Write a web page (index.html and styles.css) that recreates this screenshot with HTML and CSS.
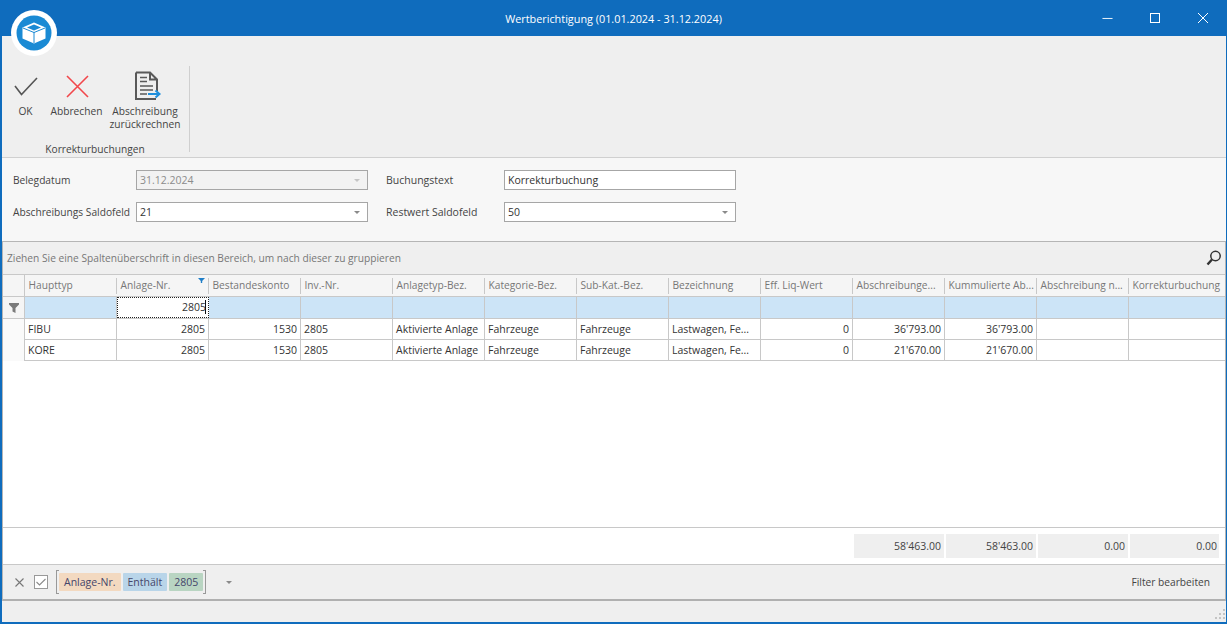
FILE: index.html
```html
<!DOCTYPE html>
<html lang="de">
<head>
<meta charset="utf-8">
<title>Wertberichtigung</title>
<link rel="stylesheet" href="styles.css">
</head>
<body>
<div class="window">
  <header class="titlebar">
    <div class="title">Wertberichtigung (01.01.2024 - 31.12.2024)</div>
    <div class="winbtns">
      <svg class="winbtn" viewBox="0 0 12 12"><path d="M0.5 6.5H11.5" stroke="#fff" fill="none"/></svg>
      <svg class="winbtn" viewBox="0 0 12 12"><rect x="1.5" y="1.5" width="9" height="9" stroke="#fff" fill="none"/></svg>
      <svg class="winbtn" viewBox="0 0 12 12"><path d="M1 1L11 11M11 1L1 11" stroke="#fff" fill="none"/></svg>
    </div>
  </header>
  <div class="logo">
    <svg viewBox="0 0 46 46" width="46" height="46">
      <circle cx="23" cy="23" r="23" fill="#fff"/>
      <circle cx="23" cy="23" r="17.500" fill="#1a8ad4"/>
      <path d="M23 12.500L34.500 17.500V28.500L23 33.500L11.500 28.500V17.500Z" fill="#fff"/>
      <path d="M23 14.500L30 17.500L23 20.500L16 17.500Z" fill="#1a8ad4"/>
      <path d="M23 22V33M12 18L23 22.500L34 18" stroke="#1a8ad4" stroke-width="1" fill="none"/>
    </svg>
  </div>
  <section class="ribbon">
    <div class="group">
      <div class="buttons">
        <div class="rbtn rbtn-ok">
          <svg class="ricon" viewBox="0 0 26 26"><path d="M3 13L9.500 21.500L25 5" stroke="#555" stroke-width="1.600" fill="none"/></svg>
          <span>OK</span>
        </div>
        <div class="rbtn rbtn-cancel">
          <svg class="ricon" viewBox="0 0 26 26"><path d="M4 3L25 24M25 3L4 24" stroke="#f2474b" stroke-width="1.600" fill="none"/></svg>
          <span>Abbrechen</span>
        </div>
        <div class="rbtn rbtn-calc">
          <svg class="ricon" viewBox="0 0 28 30"><path d="M2 1.500H16L23 8.500V20M16 1.500V8.500H23M22 28H2V1.500" stroke="#595959" stroke-width="2" fill="none"/><path d="M6 6.500H13M6 10.500H13M6 15H19M6 19H19M6 23H13" stroke="#595959" stroke-width="1.500" fill="none"/><path d="M14 23H25M21.500 19.500L25.500 23L21.500 26.500" stroke="#1f8fdc" stroke-width="2" fill="none"/></svg>
          <span>Abschreibung<br>zurückrechnen</span>
        </div>
      </div>
      <div class="group-name">Korrekturbuchungen</div>
    </div>
  </section>
  <section class="form">
    <div class="form-row">
      <label class="lbl lbl-a">Belegdatum</label>
      <div class="field field-a disabled"><span>31.12.2024</span><i class="arrow"></i></div>
      <label class="lbl lbl-b">Buchungstext</label>
      <div class="field field-b"><span>Korrekturbuchung</span></div>
    </div>
    <div class="form-row">
      <label class="lbl lbl-a">Abschreibungs Saldofeld</label>
      <div class="field field-a"><span>21</span><i class="arrow"></i></div>
      <label class="lbl lbl-b">Restwert Saldofeld</label>
      <div class="field field-b"><span>50</span><i class="arrow"></i></div>
    </div>
  </section>
  <section class="grid-wrap">
    <div class="group-panel">
      <span>Ziehen Sie eine Spaltenüberschrift in diesen Bereich, um nach dieser zu gruppieren</span>
      <svg class="search" viewBox="0 0 16 16"><circle cx="9.500" cy="6" r="4.700" stroke="#333" stroke-width="1.500" fill="none"/><path d="M6 9.500L1.500 14.500" stroke="#333" stroke-width="2.400" fill="none"/></svg>
    </div>
    <div class="row head">
      <div class="ind"></div>
      <div class="hc">Haupttyp</div>
      <div class="hc sorted">Anlage-Nr.<i class="filter-mark"></i></div>
      <div class="hc">Bestandeskonto</div>
      <div class="hc">Inv.-Nr.</div>
      <div class="hc">Anlagetyp-Bez.</div>
      <div class="hc">Kategorie-Bez.</div>
      <div class="hc">Sub-Kat.-Bez.</div>
      <div class="hc">Bezeichnung</div>
      <div class="hc">Eff. Liq-Wert</div>
      <div class="hc">Abschreibunge...</div>
      <div class="hc">Kummulierte Ab...</div>
      <div class="hc">Abschreibung n...</div>
      <div class="hc">Korrekturbuchung</div>
    </div>
    <div class="row filter">
      <div class="ind"><svg class="funnel" viewBox="0 0 10 10"><path d="M0 0H10V1.500L6.500 5V10L3.500 8.500V5L0 1.500Z" fill="#7a7a7a"/></svg></div>
      <div class="c"></div>
      <div class="c r active">2805<i class="caret"></i></div>
      <div class="c"></div><div class="c"></div><div class="c"></div><div class="c"></div><div class="c"></div><div class="c"></div><div class="c"></div><div class="c"></div><div class="c"></div><div class="c"></div><div class="c"></div>
    </div>
    <div class="row data">
      <div class="ind"></div>
      <div class="c">FIBU</div><div class="c r">2805</div><div class="c r">1530</div><div class="c">2805</div>
      <div class="c">Aktivierte Anlage</div><div class="c">Fahrzeuge</div><div class="c">Fahrzeuge</div><div class="c">Lastwagen, Fe...</div>
      <div class="c r">0</div><div class="c r">36'793.00</div><div class="c r">36'793.00</div><div class="c"></div><div class="c"></div>
    </div>
    <div class="row data">
      <div class="ind"></div>
      <div class="c">KORE</div><div class="c r">2805</div><div class="c r">1530</div><div class="c">2805</div>
      <div class="c">Aktivierte Anlage</div><div class="c">Fahrzeuge</div><div class="c">Fahrzeuge</div><div class="c">Lastwagen, Fe...</div>
      <div class="c r">0</div><div class="c r">21'670.00</div><div class="c r">21'670.00</div><div class="c"></div><div class="c"></div>
    </div>
    <div class="grid-empty"></div>
    <div class="summary">
      <div class="sum">58'463.00</div>
      <div class="sum">58'463.00</div>
      <div class="sum">0.00</div>
      <div class="sum">0.00</div>
    </div>
    <div class="filter-panel">
      <svg class="fp-x" viewBox="0 0 9 9"><path d="M0.500 0.500L8.500 8.500M8.500 0.500L0.500 8.500" stroke="#777" stroke-width="1.100" fill="none"/></svg>
      <div class="fp-check"><svg viewBox="0 0 10 8" width="10" height="8"><path d="M0.500 4L3.500 7L9.500 1" stroke="#8a8a8a" stroke-width="1.100" fill="none"/></svg></div>
      <div class="fp-expr">
        <span class="tag tag-field">Anlage-Nr.</span>
        <span class="tag tag-op">Enthält</span>
        <span class="tag tag-val">2805</span>
      </div>
      <i class="arrow fp-arrow"></i>
      <div class="fp-edit">Filter bearbeiten</div>
    </div>
  </section>
  <footer class="status"><svg class="grip" viewBox="0 0 11 11"><path d="M9 1h2v2H9zM5 5h2v2H5zM9 5h2v2H9zM1 9h2v2H1zM5 9h2v2H5zM9 9h2v2H9z" fill="#c4c4c4"/></svg></footer>
</div>
</body>
</html>
```
FILE: styles.css
```css
* { box-sizing: border-box; }
html, body { margin: 0; height: 100%; }
body { font-family: "Open Sans", "Liberation Sans", sans-serif; font-size: 10.200px; color: #444; background: #fff; overflow: hidden; }
.window { position: relative; width: 1227px; height: 624px; display: flex; flex-direction: column; border-left: 2px solid #0f6cbd; border-right: 1px solid #0f6cbd; border-bottom: 2px solid #0f6cbd; background: #efefef; }
.titlebar { height: 36px; margin: 0 -1px 0 -2px; background: #0f6cbd; color: #fff; position: relative; display: flex; align-items: center; justify-content: center; flex: none; }
.title { font-size: 10.850px; }
.winbtns { position: absolute; right: 0; top: 0; height: 36px; display: flex; align-items: center; gap: 36px; padding-right: 18px; }
.winbtn { width: 12px; height: 12px; display: block; }
.winbtn:nth-child(1) { width: 11px; }
.logo { position: absolute; left: 9px; top: 10px; width: 46px; height: 46px; }
.logo svg { display: block; }

.ribbon { height: 122px; flex: none; background: #efefef; border-bottom: 1px solid #d0d0d0; padding-top: 30px; }
.group { width: 188px; height: 86px; border-right: 1px solid #cfcfcf; display: flex; flex-direction: column; position: relative; }
.buttons { display: flex; height: 68px; align-items: flex-start; }
.rbtn { display: flex; flex-direction: column; align-items: center; text-align: center; line-height: 13px; position: relative; padding-top: 39px; }
.ricon { position: absolute; display: block; }
.rbtn-ok { width: 47px; }
.rbtn-ok .ricon { width: 26px; height: 26px; left: 10px; top: 7px; }
.rbtn-cancel { width: 55px; }
.rbtn-cancel .ricon { width: 26px; height: 26px; left: 14px; top: 7px; }
.rbtn-calc { width: 78px; margin-left: 2px; }
.rbtn-calc .ricon { width: 28px; height: 30px; left: 28px; top: 5px; }
.group-name { text-align: center; line-height: 13px; margin-top: 12px; padding-right: 1px; }

.form { height: 83px; flex: none; background: #f7f7f7; padding: 12px 0 0 11px; display: flex; flex-direction: column; gap: 12px; }
.form-row { display: flex; align-items: center; height: 20px; }
.lbl { width: 123px; flex: none; }
.lbl-b { width: 118px; margin-left: 18px; font-size: 10.500px; }
.field { height: 20px; background: #fff; border: 1px solid #a6a6a6; display: flex; align-items: center; justify-content: space-between; padding: 0 7px 0 3px; flex: none; color: #333; font-size: 10.500px; }
.field-a { width: 232px; }
.field-b { width: 232px; }
.field.disabled { background: #f2f2f2; color: #8c8c8c; }
.arrow { display: block; width: 0; height: 0; border: 3.500px solid transparent; border-top: 3.500px solid #8a8a8a; border-bottom: 0; }
.disabled .arrow { border-top-color: #c4c4c4; }

.grid-wrap { flex: 1; min-height: 0; display: flex; flex-direction: column; background: #fff; border-left: 1px solid #b5b5b5; border-right: 1px solid #b5b5b5; }
.group-panel { height: 34px; flex: none; background: #efefef; border-top: 1px solid #b5b5b5; border-bottom: 1px solid #c8c8c8; display: flex; align-items: center; justify-content: space-between; padding: 0 3px 0 4px; color: #777; }
.search { width: 16px; height: 16px; display: block; margin-top: -1px; }
.row { display: grid; grid-template-columns: 22px repeat(12, 92px) 1fr; flex: none; }
.head { height: 22px; background: #f5f5f5; border-bottom: 1px solid #c8c8c8; }
.ind { border-right: 1px solid #c8c8c8; display: flex; align-items: center; justify-content: center; }
.hc { position: relative; padding: 0 0 0 3.500px; line-height: 21px; color: #777; white-space: nowrap; overflow: hidden; }
.hc::after { content: ""; position: absolute; right: 0; top: 3px; bottom: 2px; border-right: 1px solid #c8c8c8; }
.hc:last-child::after { display: none; }
.filter-mark { position: absolute; right: 4px; top: 3px; width: 7px; height: 5px; background: #1f7ec8; clip-path: polygon(0 0, 100% 0, 60% 60%, 60% 100%, 40% 100%, 40% 60%); }
.filter { height: 22px; background: #cce4f7; border-bottom: 1px solid #c8c8c8; }
.filter .ind { background: #f5f5f5; }
.funnel { width: 10px; height: 10px; display: block; }
.c { padding: 0 3px; line-height: 20px; border-right: 1px solid #c8c8c8; white-space: nowrap; overflow: hidden; color: #333; font-size: 10.500px; }
.c:last-child { border-right: 0; }
.r { text-align: right; }
.active { background: #fff; outline: 1px dotted #222; outline-offset: -1px; position: relative; border-right: 0; line-height: 21px; }
.caret { display: inline-block; position: absolute; right: 3px; top: 3px; height: 14px; border-right: 1px solid #111; }
.data { height: 21px; }
.data .c { border-bottom: 1px solid #c8c8c8; }
.data .ind { background: #fafafa; }
.grid-empty { flex: 1; border-bottom: 1px solid #c8c8c8; }
.summary { height: 36px; flex: none; display: flex; justify-content: flex-end; align-items: flex-start; gap: 2px; padding: 6px 6px 0 0; background: #fff; font-size: 10.500px; }
.sum { width: 90px; height: 24px; background: #efefef; text-align: right; line-height: 24px; padding-right: 3px; color: #444; }
.sum:last-child { width: 89px; padding-right: 2px; }
.filter-panel { height: 37px; flex: none; background: #efefef; border-top: 1px solid #c8c8c8; border-bottom: 2px solid #b0b0b0; display: flex; align-items: center; padding-left: 12px; position: relative; }
.fp-x { width: 9px; height: 9px; display: block; }
.fp-check { width: 14px; height: 14px; margin-left: 10px; background: #fff; border: 1px solid #999; display: flex; align-items: center; justify-content: center; }
.fp-expr { margin-left: 8px; height: 24px; display: flex; align-items: center; gap: 2px; padding: 0 2px; position: relative; border-left: 1px solid #999; border-right: 1px solid #999; }
.fp-expr::before, .fp-expr::after { content: ""; position: absolute; left: 0; right: 0; height: 0; }
.fp-expr::before { top: 0; border-image: linear-gradient(90deg, #999 0 3px, transparent 3px calc(100% - 3px), #999 calc(100% - 3px)) 1; border-top: 1px solid; }
.fp-expr::after { bottom: 0; border-image: linear-gradient(90deg, #999 0 3px, transparent 3px calc(100% - 3px), #999 calc(100% - 3px)) 1; border-bottom: 1px solid; }
.tag { height: 18px; line-height: 18px; padding: 0 5px; color: #45456a; border-radius: 1px; white-space: nowrap; font-size: 10.500px; }
.tag-field { background: #f3d9c0; }
.tag-op { background: #b9d5e9; }
.tag-val { background: #b9d5c2; }
.fp-arrow { margin-left: 20px; }
.fp-edit { margin-left: auto; margin-right: 15px; color: #444; }
.status { height: 21px; flex: none; background: #efefef; position: relative; }
.grip { position: absolute; right: 1px; bottom: 3px; width: 11px; height: 11px; display: block; }
```
